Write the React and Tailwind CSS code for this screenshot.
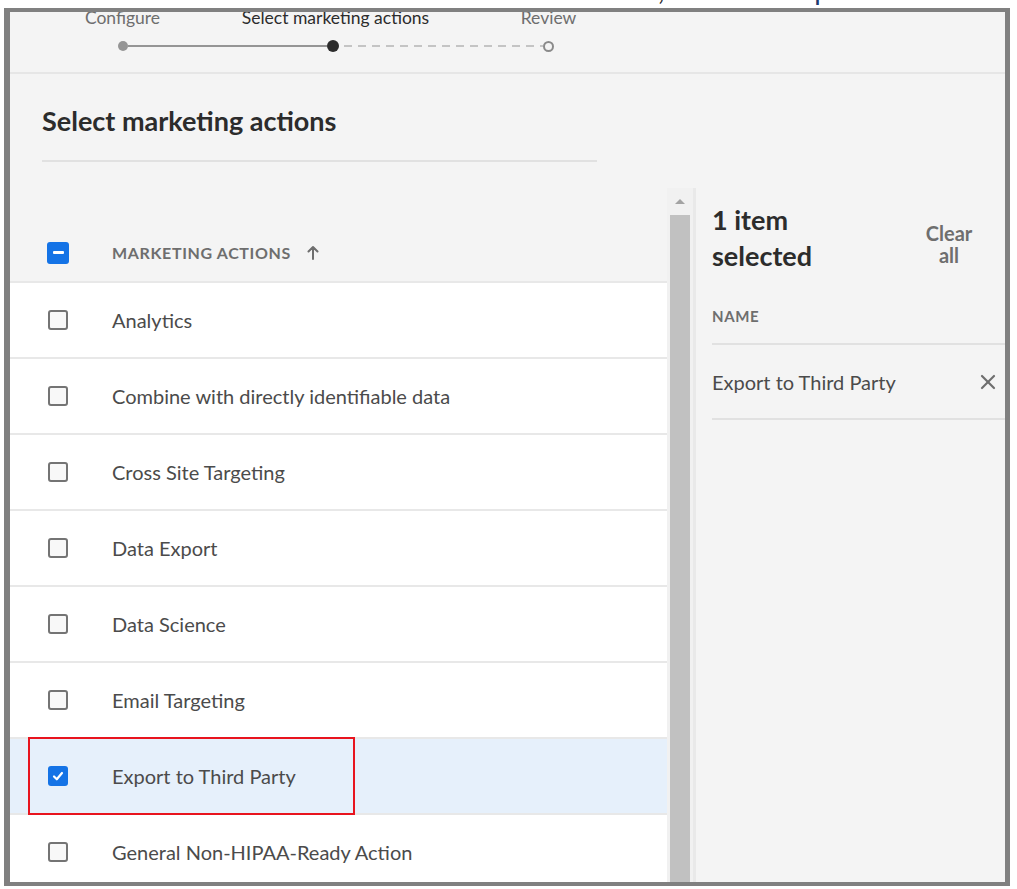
import React from 'react';
import { X } from 'lucide-react';

const actions = [
  { name: 'Analytics' },
  { name: 'Combine with directly identifiable data' },
  { name: 'Cross Site Targeting' },
  { name: 'Data Export' },
  { name: 'Data Science' },
  { name: 'Email Targeting' },
  { name: 'Export to Third Party', selected: true },
  { name: 'General Non-HIPAA-Ready Action' },
];

const steps = [
  { label: 'Configure', state: 'done' },
  { label: 'Select marketing actions', state: 'current' },
  { label: 'Review', state: 'todo' },
];

const dashed = 'bg-[repeating-linear-gradient(90deg,#c4c4c4_0_8px,transparent_8px_14px)]';

const Stepper = () => (
  <div className="h-[62px] shrink-0 border-b-2 border-[#e6e6e6] flex pl-[6px]">
    {steps.map((step, i) => (
      <div key={step.label} className="w-[213px] flex flex-col">
        <div
          className={`-mt-[5px] h-[21px] leading-[21px] text-[17.5px] text-center ${
            step.state === 'current' ? 'text-[#2c2c2c]' : 'text-[#6e6e6e]'
          }`}
        >
          {step.label}
        </div>
        <div className="mt-[12px] h-[12px] flex items-center">
          <div
            className={`flex-1 h-[2px] ${
              i === 0 ? '' : i === 1 ? 'bg-[#959595]' : dashed
            }`}
          />
          {step.state === 'done' && <div className="w-[10px] h-[10px] rounded-full bg-[#959595]" />}
          {step.state === 'current' && <div className="w-[12px] h-[12px] rounded-full bg-[#2c2c2c]" />}
          {step.state === 'todo' && (
            <div className="w-[11px] h-[11px] rounded-full border-2 border-[#8a8a8a] bg-[#f4f4f4]" />
          )}
          <div className={`flex-1 h-[2px] ${i === 0 ? 'bg-[#959595]' : i === 1 ? `${dashed} ml-[5px]` : ''}`} />
        </div>
      </div>
    ))}
  </div>
);

const Checkbox = ({ checked }) =>
  checked ? (
    <div className="w-[20px] h-[20px] rounded-[3px] bg-[#1473e6] flex items-center justify-center">
      <svg width="14" height="14" viewBox="0 0 14 14" fill="none">
        <path d="M3 7.5l2.8 2.8L11 4" stroke="#fff" strokeWidth="2.2" strokeLinecap="round" strokeLinejoin="round" />
      </svg>
    </div>
  ) : (
    <div className="w-[20px] h-[20px] rounded-[3px] border-2 border-[#747474] bg-[#f8f8f8]" />
  );

const App = () => {
  return (
    <div className="w-[1017px] h-[889px] bg-white overflow-hidden font-['Lato',sans-serif]">
      <div className="h-[8px] overflow-hidden flex items-end">
        <span className="ml-[658px] pb-[5px] text-[28px] leading-none text-[#2b2b2b]">,</span>
        <span className="ml-[150px] pb-[5px] text-[28px] leading-none text-[#1d3b6e]">p</span>
      </div>
      <div className="ml-[4px] w-[1006px] h-[878px] border-t-4 border-l-[6px] border-r-[5px] border-b-4 border-[#808080] bg-[#f4f4f4] flex flex-col overflow-hidden">
        <Stepper />

        <div className="h-[114px] shrink-0 pl-[32px] pt-[30px]">
          <h1 className="text-[27px] leading-[34px] font-bold text-[#2c2c2c]">Select marketing actions</h1>
          <div className="mt-[22px] w-[555px] h-[2px] bg-[#e1e1e1]" />
        </div>

        <div className="flex-1 min-h-0 flex">
          <div className="w-[657px] shrink-0 flex flex-col">
            <div className="h-[93px] shrink-0 flex items-center pt-[48px] pl-[37px] pb-[12px]">
              <div className="w-[22px] h-[22px] rounded-[3px] bg-[#1473e6] flex items-center justify-center">
                <div className="w-[11px] h-[3px] bg-white rounded-[1px]" />
              </div>
              <span className="ml-[43px] text-[16px] font-bold tracking-[0.04em] text-[#6e6e6e]">MARKETING ACTIONS</span>
              <svg className="ml-[16px]" width="12" height="15" viewBox="0 0 12 15" fill="none">
                <path d="M6 14V2M1.5 6.5L6 2l4.5 4.5" stroke="#6e6e6e" strokeWidth="2" strokeLinecap="round" strokeLinejoin="round" />
              </svg>
            </div>
            <div className="flex-1 bg-white">
              {actions.map((a) => (
                <div
                  key={a.name}
                  className={`h-[76px] border-t-2 border-[#e8e8e8] flex items-center pl-[38px] ${
                    a.selected ? 'bg-[#e6f0fb]' : ''
                  }`}
                >
                  {a.selected ? (
                    <div className="-ml-[20px] w-[327px] h-[78px] -my-[2px] border-2 border-[#e8141e] flex items-center pl-[18px]">
                      <Checkbox checked />
                      <span className="ml-[44px] text-[20px] text-[#4b4b4b]">{a.name}</span>
                    </div>
                  ) : (
                    <>
                      <Checkbox />
                      <span className="ml-[44px] text-[20px] text-[#4b4b4b]">{a.name}</span>
                    </>
                  )}
                </div>
              ))}
            </div>
          </div>

          <div className="w-[26px] shrink-0 bg-[#f1f1f1] flex flex-col items-center">
            <div className="h-[27px] flex items-center justify-center">
              <div className="w-0 h-0 border-l-[5px] border-r-[5px] border-b-[5px] border-l-transparent border-r-transparent border-b-[#a3a3a3]" />
            </div>
            <div className="flex-1 w-[20px] bg-[#c1c1c1]" />
          </div>
          <div className="w-[3px] shrink-0 bg-[#e9e9e9]" />

          <div className="flex-1 pl-[16px]">
            <div className="flex justify-between pr-[30px] pt-[14px]">
              <div className="w-[150px] text-[27px] leading-[36px] font-bold text-[#2c2c2c]">1 item selected</div>
              <button className="mt-[12px] w-[52px] text-center text-[20px] leading-[22px] font-bold text-[#6e6e6e]">
                Clear all
              </button>
            </div>
            <div className="mt-[32px] border-b-2 border-[#e1e1e1] pb-[17px]">
              <div className="text-[15px] leading-[20px] font-bold tracking-[0.04em] text-[#6e6e6e]">NAME</div>
            </div>
            <div className="h-[75px] border-b-2 border-[#e1e1e1] flex items-center justify-between pr-[5px]">
              <span className="text-[20px] text-[#4b4b4b]">Export to Third Party</span>
              <X size={24} strokeWidth={2.2} color="#6e6e6e" />
            </div>
          </div>
        </div>
      </div>
    </div>
  );
};

export default App;
